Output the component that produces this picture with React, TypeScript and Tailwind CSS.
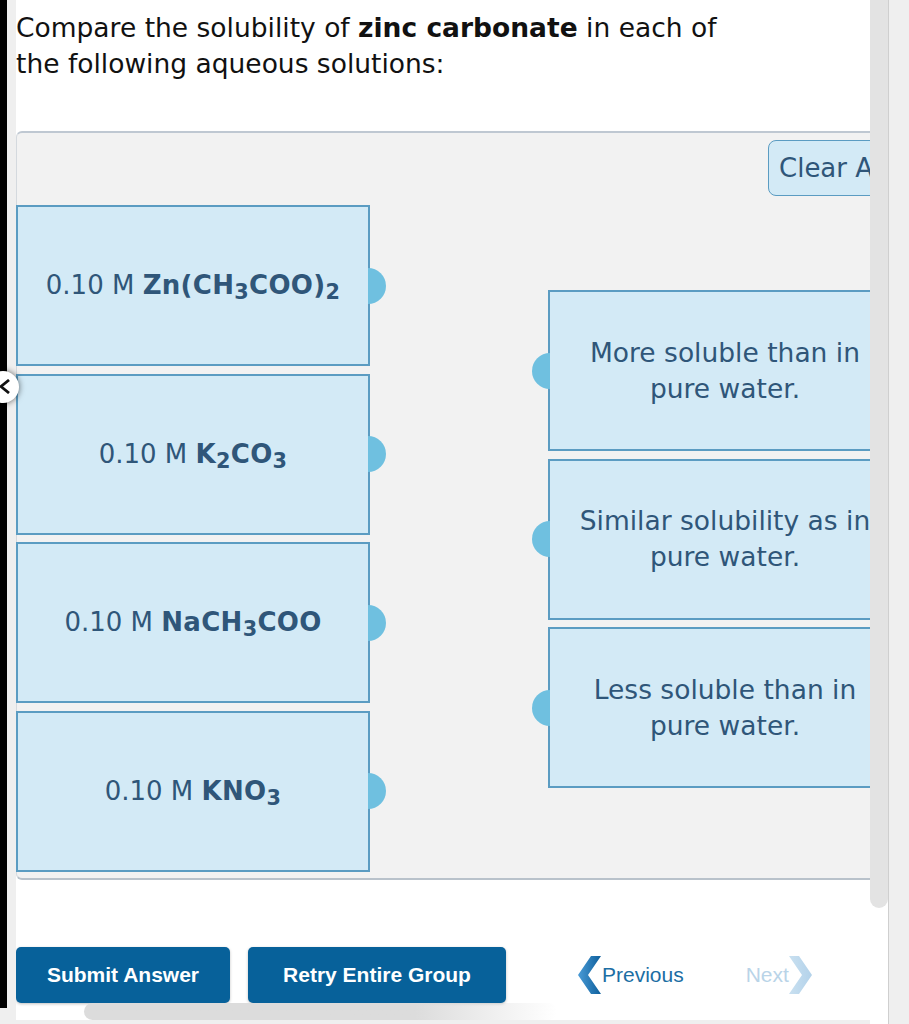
import React from 'react';

const Sub: React.FC<{ children: React.ReactNode }> = ({ children }) => (
  <sub className="text-[0.8em]">{children}</sub>
);

const leftItems = [
  { id: 'zn', formula: <>Zn(CH<Sub>3</Sub>COO)<Sub>2</Sub></> },
  { id: 'k2co3', formula: <>K<Sub>2</Sub>CO<Sub>3</Sub></> },
  { id: 'nach3coo', formula: <>NaCH<Sub>3</Sub>COO</> },
  { id: 'kno3', formula: <>KNO<Sub>3</Sub></> },
];

const targets = [
  'More soluble than in pure water.',
  'Similar solubility as in pure water.',
  'Less soluble than in pure water.',
];

const Chevron: React.FC<{ dir: 'left' | 'right'; light?: boolean }> = ({ dir, light }) => (
  <svg width="23" height="38" viewBox="0 0 23 38" className="shrink-0">
    <defs>
      <linearGradient id={light ? 'chl' : 'chd'} x1="0" y1="0" x2="1" y2="0">
        <stop offset="0" stopColor={light ? '#c9e0f0' : '#4a9bd6'} />
        <stop offset="1" stopColor={light ? '#b3d2ea' : '#0e5f9c'} />
      </linearGradient>
    </defs>
    <polygon
      points={dir === 'left' ? '23,0 10,19 23,38 13,38 0,19 13,0' : '0,0 13,19 0,38 10,38 23,19 10,0'}
      fill={`url(#${light ? 'chl' : 'chd'})`}
    />
  </svg>
);

export default function App() {
  return (
    <div className="relative flex h-[1024px] w-[909px] overflow-hidden bg-white font-['DejaVu_Sans',sans-serif]">
      {/* left edge */}
      <div className="flex w-[7px] shrink-0 flex-col">
        <div className="h-[1008px] bg-black" />
        <div className="flex-1 bg-[#efefef]" />
      </div>
      <div className="w-[9px] shrink-0 bg-[#efefef]" />

      {/* main */}
      <main className="flex w-[854px] shrink-0 flex-col overflow-hidden">
        <h1 className="pt-[10px] text-[26.5px] leading-[36px] text-[#111]">
          Compare the solubility of <b>zinc carbonate</b> in each of
          <br />
          the following aqueous solutions:
        </h1>

        <div className="mt-[49px] box-border flex h-[749px] w-[900px] shrink-0 flex-col rounded-l-[6px] border-t-2 border-b-2 border-l border-t-[#bfc8d2] border-b-[#b9c2cb] border-l-[#d4d9de] bg-[#f2f2f2]">
          <button className="mt-[7px] ml-[751px] box-border h-[56px] w-[132px] rounded-[8px] border-[1.5px] border-[#5b9cc2] bg-[#d3eaf6] px-[10px] text-left text-[26px] whitespace-nowrap text-[#2f5679]">
            Clear All
          </button>

          <div className="mt-[9px] flex">
            <div className="-ml-px flex flex-col gap-[7.5px]">
              {leftItems.map((it) => (
                <div
                  key={it.id}
                  className="relative box-border flex h-[161px] w-[354px] items-center justify-center border-2 border-[#5b9cc2] bg-[#d3eaf6] text-[26px] whitespace-nowrap text-[#2f5679]"
                >
                  <span>
                    0.10 M <b className="tracking-[0.3px]">{it.formula}</b>
                  </span>
                  <span className="absolute top-1/2 left-full h-[36px] w-[18px] -translate-y-1/2 rounded-r-full bg-[#6fc0e0]" />
                </div>
              ))}
            </div>

            <div className="mt-[85px] ml-[178px] flex flex-col gap-[7.5px]">
              {targets.map((t) => (
                <div
                  key={t}
                  className="relative box-border flex h-[161px] w-[354px] items-center justify-center border-2 border-[#5b9cc2] bg-[#d3eaf6] px-[20px] text-center text-[26.5px] leading-[36px] text-[#2f5679]"
                >
                  <span>{t}</span>
                  <span className="absolute top-1/2 right-full h-[36px] w-[18px] -translate-y-1/2 rounded-l-full bg-[#6fc0e0]" />
                </div>
              ))}
            </div>
          </div>
        </div>

        {/* footer */}
        <div className="mt-[67px] flex h-[56px] items-center font-['Liberation_Sans',Arial,sans-serif]">
          <button className="h-[56px] w-[214px] rounded-[5px] bg-[#07619a] text-[21px] font-bold text-white shadow-[0_1px_3px_rgba(0,0,0,0.25)]">
            Submit Answer
          </button>
          <button className="ml-[18px] h-[56px] w-[258px] rounded-[5px] bg-[#07619a] text-[21px] font-bold text-white shadow-[0_1px_3px_rgba(0,0,0,0.25)]">
            Retry Entire Group
          </button>
          <div className="ml-[72px] flex items-center">
            <Chevron dir="left" />
            <span className="ml-[1px] text-[21px] text-[#1c6ea4]">Previous</span>
          </div>
          <div className="ml-[62px] flex items-center">
            <span className="text-[21px] text-[#b9d4e8]">Next</span>
            <Chevron dir="right" light />
          </div>
        </div>

        <div className="ml-[68px] h-[17px] w-[473px] rounded-full bg-gradient-to-r from-[#dcdcdc] from-70% to-transparent" />
        <div className="h-[4px] bg-[#efefef]" />
      </main>

      {/* vertical scrollbar */}
      <div className="w-[18px] shrink-0 bg-white">
        <div className="h-[908px] rounded-b-[9px] bg-[#e3e3e3]" />
      </div>
      <div className="flex-1 border-l border-[#cfcfcf] bg-[#efefef]" />

      {/* collapse handle */}
      <div className="absolute top-[371px] left-[-13px] h-[32px] w-[32px] rounded-full bg-white shadow-[0_0_6px_rgba(0,0,0,0.6)]">
        <svg width="11" height="15" viewBox="0 0 11 15" className="absolute top-[8px] left-[12px]">
          <polyline points="10,1 2,7.5 10,14" fill="none" stroke="#111" strokeWidth="2.8" />
        </svg>
      </div>
    </div>
  );
}
